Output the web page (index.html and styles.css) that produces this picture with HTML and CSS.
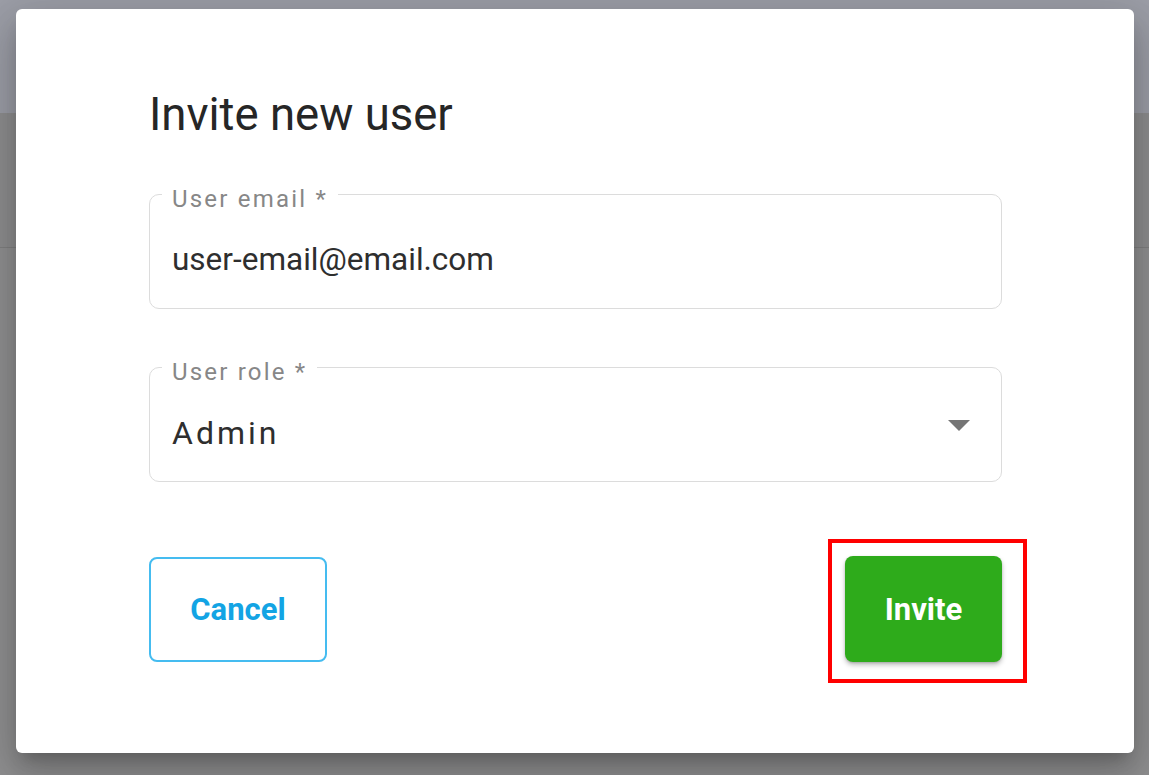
FILE: index.html
```html
<!DOCTYPE html>
<html lang="en">
<head>
    <meta charset="UTF-8">
    <meta name="viewport" content="width=device-width, initial-scale=1.0">
    <title>Invite new user</title>
    <link rel="stylesheet" href="styles.css">
</head>
<body>
    <div class="page">
        <div class="page-header"></div>
        <div class="page-toolbar"></div>
        <div class="page-body"></div>
    </div>

    <div class="dialog">
        <h1 class="dialog-title">Invite new user</h1>

        <div class="field">
            <span class="field-label">User email *</span>
            <div class="field-value">user-email@email.com</div>
        </div>

        <div class="field field-select">
            <span class="field-label">User role *</span>
            <div class="field-value spaced">Admin</div>
            <svg class="select-arrow" width="22" height="11" viewBox="0 0 22 11">
                <path d="M0 0 L22 0 L11 11 Z" fill="#757575"/>
            </svg>
        </div>

        <div class="dialog-actions">
            <button class="btn btn-outline">Cancel</button>
            <div class="highlight-wrap">
                <button class="btn btn-green">Invite</button>
                <div class="highlight"></div>
            </div>
        </div>
    </div>
</body>
</html>
```

FILE: styles.css
```css
* {
    box-sizing: border-box;
}
body {
    margin: 0;
    width: 1149px;
    height: 775px;
    overflow: hidden;
    font-family: Roboto, 'Liberation Sans', sans-serif;
    background-color: #8f8f90;
}
.page {
    display: flex;
    flex-direction: column;
    height: 100%;
}
.page-header {
    height: 113px;
    background-color: #9c9ea7;
}
.page-toolbar {
    height: 135px;
    background-color: #8e8e8f;
    border-bottom: 1px solid #808081;
}
.page-body {
    flex: 1;
    background-color: #909091;
}
.dialog {
    position: absolute;
    left: 16px;
    top: 9px;
    width: 1118px;
    height: 744px;
    background: #fff;
    border-radius: 6px;
    padding: 78px 132px 0 133px;
    box-shadow: 0 11px 15px -7px rgba(0,0,0,0.2), 0 24px 38px 3px rgba(0,0,0,0.14), 0 9px 46px 8px rgba(0,0,0,0.12);
}
.dialog-title {
    margin: 0 0 51px;
    font-size: 45.5px;
    line-height: 56px;
    font-weight: 400;
    color: #262626;
}
.field {
    position: relative;
    height: 115px;
    border: 1px solid #dcdcdc;
    border-radius: 10px;
    padding: 46px 22px 0;
    margin-bottom: 58px;
}
.field-label {
    position: absolute;
    left: 12px;
    top: -8px;
    padding: 0 10px;
    background: #fff;
    font-size: 24px;
    line-height: 24px;
    letter-spacing: 2.2px;
    color: #878787;
}
.field-value {
    font-size: 31.5px;
    line-height: 38px;
    color: #2e2e2e;
}
.field-value.spaced {
    font-size: 32px;
    letter-spacing: 3px;
}
.select-arrow {
    position: absolute;
    right: 31px;
    top: 50%;
    margin-top: -5px;
}
.dialog-actions {
    display: flex;
    justify-content: space-between;
    align-items: flex-end;
    margin-top: 74px;
}
.btn {
    display: flex;
    align-items: center;
    justify-content: center;
    font-family: Roboto, 'Liberation Sans', sans-serif;
    font-size: 31px;
    font-weight: 700;
    border-radius: 8px;
    cursor: pointer;
}
.btn-outline {
    width: 178px;
    height: 105px;
    background: #fff;
    color: #13a4e4;
    border: 2px solid #45bcf0;
}
.btn-green {
    width: 157px;
    height: 106px;
    background: #2eab1b;
    color: #fff;
    border: none;
    box-shadow: 0 3px 5px rgba(0,0,0,0.25), 0 1px 2px rgba(0,0,0,0.15);
}
.highlight-wrap {
    position: relative;
}
.highlight {
    position: absolute;
    left: -17px;
    top: -17px;
    right: -25px;
    bottom: -21px;
    border: 4px solid #ff0000;
}
```
